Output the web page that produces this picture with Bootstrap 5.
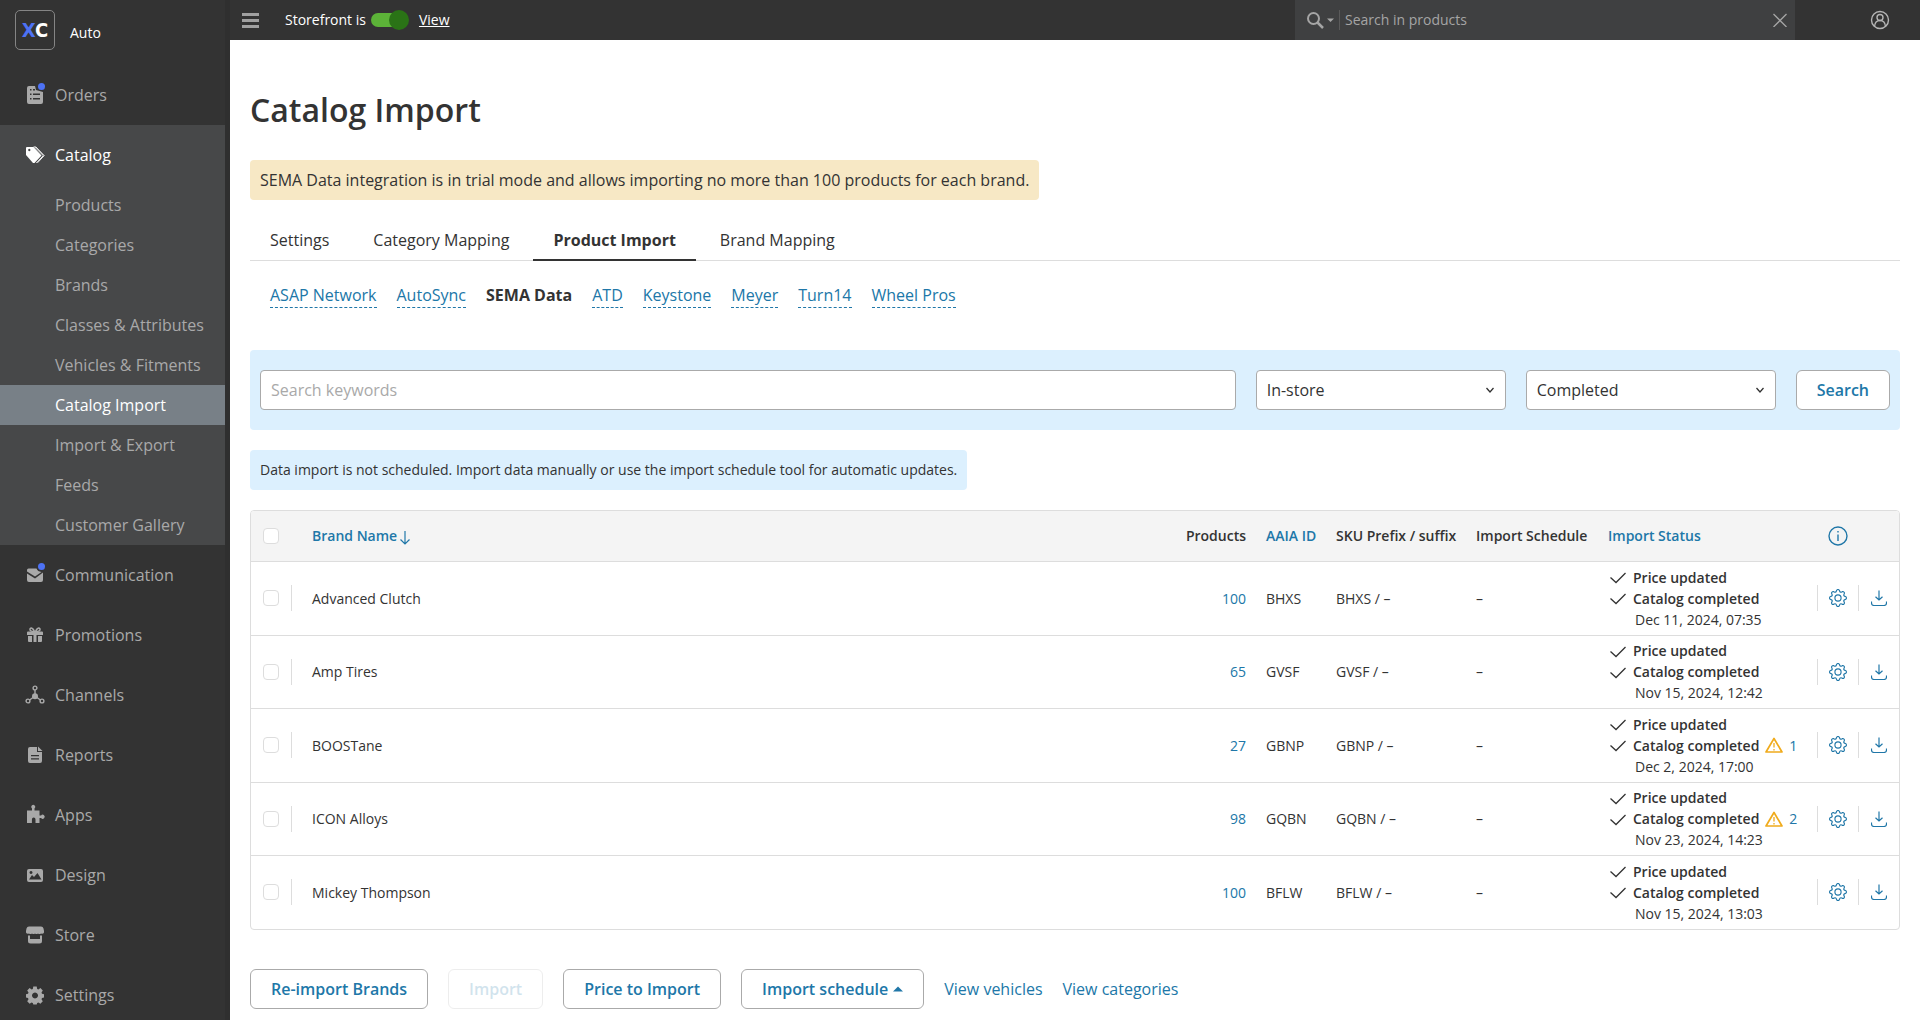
<!DOCTYPE html>
<html lang="en">
<head>
<meta charset="utf-8">
<meta name="viewport" content="width=device-width, initial-scale=1">
<title>Catalog Import</title>
<link href="https://cdn.jsdelivr.net/npm/bootstrap@5.3.0/dist/css/bootstrap.min.css" rel="stylesheet">
<style>
:root { --ink: #333; --blue: #2077a8; --line: #ddd; --muted: #a9a9a9; }
body { font-family: "Open Sans", "Noto Sans", sans-serif; font-size: 16px; line-height: 24px; color: var(--ink); background: #fff; }
a { color: var(--blue); text-decoration: none; }
.fs-small { font-size: 14px; line-height: 20px; }
.fw-mid { font-weight: 500; }

/* sidebar */
.side { width: 230px; background: #333; border-right: 5px solid #2f2f2f; }
.brand { height: 65px; padding: 10px 15px; gap: 15px; }
.brand-logo { width: 40px; height: 40px; border: 1px solid #858585; border-radius: 5px; font: 700 20px/38px "DejaVu Sans Condensed", "DejaVu Sans", sans-serif; color: #fff; text-align: center; }
.brand-logo span { color: #4d72f5; }
.brand-name { color: #fff; font-weight: 500; margin-top: 13px; }
.side-link { display: flex; align-items: center; height: 60px; padding-left: 25px; gap: 10px; color: var(--muted); }
.side-link svg { width: 20px; height: 20px; fill: currentColor; overflow: visible; }
.side-open { background: #474849; }
.side-open > .side-link { color: #fff; font-weight: 500; }
.sub-link { display: block; height: 40px; line-height: 40px; padding-left: 55px; color: var(--muted); }
.sub-link.active { background: #788087; color: #fff; font-weight: 500; }

/* top bar */
.topbar { height: 40px; background: #333; padding-left: 12px; color: #fff; }
.menu-btn { width: 17px; height: 20px; margin-right: 26px; padding: 0; border: 0; background: none; color: #a0a0a0; display: flex; align-items: center; }
.shop-switch { appearance: none; width: 38px; height: 20px; margin: 0 10px 0 5px; border: 0; background: url("data:image/svg+xml,%3Csvg xmlns='http://www.w3.org/2000/svg' viewBox='0 0 38 20'%3E%3Crect y='3' width='34' height='14' rx='7' fill='%235cb338'/%3E%3Ccircle cx='28' cy='10' r='10' fill='%232a7316'/%3E%3C/svg%3E"); }
.top-search { width: 500px; height: 40px; background: #3f4041; color: #a5a5a5; padding: 0 8px 0 12px; }
.top-search input { flex: 1; min-width: 0; border: 0; border-left: 1px solid #5a5a5a; outline: 0; height: 20px; padding: 0 5px; background: none; color: #a5a5a5; }
.top-search input::placeholder { color: #a5a5a5; opacity: 1; }
.icon-btn { border: 0; padding: 0; background: none; color: inherit; display: flex; align-items: center; }
.account { width: 125px; padding-right: 30px; color: #b5b5b5; }

/* content */
.content { padding: 50px 20px 10px; }
.page-title { font-size: 32px; line-height: 40px; font-weight: 600; margin: 0 0 30px; }
.note { width: fit-content; padding: 8px 10px; border-radius: 4px; }
.note-warn { background: #f7e8c5; }
.note-info { background: #dcf0fe; padding: 10px; margin-bottom: 20px; }
.page-tabs { gap: 4px; margin: 20px 0 23px; box-shadow: inset 0 -1px var(--line); }
.page-tabs a { display: block; height: 41px; line-height: 40px; padding: 0 20px; color: var(--ink); }
.page-tabs a.active { font-weight: 700; box-shadow: inset 0 -2px var(--ink); }
.source-tabs { gap: 20px; padding: 0 20px; margin-bottom: 42px; line-height: 22px; }
.source-tabs a { display: block; height: 24px; border-bottom: 1px dashed var(--blue); }
.source-tabs a.active { font-weight: 700; color: var(--ink); border-color: transparent; }
.filter { background: #dcf0fe; border-radius: 4px; padding: 20px 10px; gap: 20px; margin-bottom: 20px; }
.filter .form-control, .filter .form-select { height: 40px; border: 1px solid #aaa; border-radius: 4px; padding: 0 10px; color: var(--ink); }
.filter .form-control::placeholder { color: #a9a9a9; }
.filter .form-select { width: 250px; background-image: url("data:image/svg+xml,%3Csvg xmlns='http://www.w3.org/2000/svg' viewBox='0 0 10 10' fill='none' stroke='%23333' stroke-width='1.3'%3E%3Cpath d='M1.5 3 5 7l3.500-4'/%3E%3C/svg%3E"); background-size: 10px 10px; background-position: right 10px center; }
.btn-line { height: 40px; padding: 0 20px; border: 1px solid #aaa; border-radius: 6px; background: #fff; color: var(--blue); font-weight: 600; font-size: 16px; line-height: 24px; }
.btn-line:disabled { opacity: .2; color: var(--blue); background: #fff; border-color: #aaa; }
.actions { gap: 20px; }

/* brand table */
.grid-box { border: 1px solid var(--line); border-radius: 4px; overflow: hidden; margin-bottom: 39px; }
.brands { width: 100%; table-layout: fixed; font-size: 14px; line-height: 21px; }
.brands th { height: 50px; background: #f4f4f4; font-weight: 600; padding: 0 10px; white-space: nowrap; }
.brands td { padding: 0 10px; border-top: 1px solid var(--line); white-space: nowrap; }
.brands tbody tr:nth-child(odd) { height: 74px; }
.brands tbody tr:nth-child(even) { height: 73px; }
.brands .pick { padding: 0 0 0 12px; }
.brands .tool { padding: 0; }
.tool a { display: flex; justify-content: center; align-items: center; height: 26px; border-left: 1px solid var(--line); }
.pick-in { display: flex; align-items: center; height: 26px; width: 29px; }
.brands td .pick-in { border-right: 1px solid var(--line); }
.pick input { appearance: none; width: 16px; height: 16px; margin: 0; border: 1px solid var(--line); border-radius: 4px; background: #fff; }
.sort-arrow { margin-left: 3px; }
.state { display: flex; align-items: center; height: 21px; gap: 5px; font-weight: 600; }
.state .warn { display: flex; align-items: center; gap: 6px; font-weight: 400; margin-left: 1px; }
.state-date { padding-left: 27px; }
</style>
<script src="https://cdn.jsdelivr.net/npm/bootstrap@5.3.0/dist/js/bootstrap.bundle.min.js"></script>
</head>
<body>
<svg class="d-none" aria-hidden="true">
  <symbol id="gear" viewBox="0 0 16 16"><path d="M8 4.754a3.246 3.246 0 1 0 0 6.492 3.246 3.246 0 0 0 0-6.492M5.754 8a2.246 2.246 0 1 1 4.492 0 2.246 2.246 0 0 1-4.492 0"/><path d="M9.796 1.343c-.527-1.79-3.065-1.79-3.592 0l-.094.319a.873.873 0 0 1-1.255.52l-.292-.16c-1.64-.892-3.433.902-2.54 2.541l.159.292a.873.873 0 0 1-.52 1.255l-.319.094c-1.79.527-1.79 3.065 0 3.592l.319.094a.873.873 0 0 1 .52 1.255l-.16.292c-.892 1.64.901 3.434 2.541 2.54l.292-.159a.873.873 0 0 1 1.255.52l.094.319c.527 1.79 3.065 1.79 3.592 0l.094-.319a.873.873 0 0 1 1.255-.52l.292.16c1.64.893 3.434-.902 2.54-2.541l-.159-.292a.873.873 0 0 1 .52-1.255l.319-.094c1.79-.527 1.79-3.065 0-3.592l-.319-.094a.873.873 0 0 1-.52-1.255l.16-.292c.893-1.64-.902-3.433-2.541-2.54l-.292.159a.873.873 0 0 1-1.255-.52zm-2.633.283c.246-.835 1.428-.835 1.674 0l.094.319a1.873 1.873 0 0 0 2.693 1.115l.291-.16c.764-.415 1.6.42 1.184 1.185l-.159.292a1.873 1.873 0 0 0 1.116 2.692l.318.094c.835.246.835 1.428 0 1.674l-.319.094a1.873 1.873 0 0 0-1.115 2.693l.16.291c.415.764-.42 1.6-1.185 1.184l-.291-.159a1.873 1.873 0 0 0-2.693 1.116l-.094.318c-.246.835-1.428.835-1.674 0l-.094-.319a1.873 1.873 0 0 0-2.692-1.115l-.292.16c-.764.415-1.6-.42-1.184-1.185l.159-.291A1.873 1.873 0 0 0 1.945 8.93l-.319-.094c-.835-.246-.835-1.428 0-1.674l.319-.094A1.873 1.873 0 0 0 3.06 4.377l-.16-.292c-.415-.764.42-1.6 1.185-1.184l.292.159a1.873 1.873 0 0 0 2.692-1.115z"/></symbol>
  <symbol id="save" viewBox="0 0 16 16"><path d="M8 .5v9.500M4.500 6.800 8 10l3.500-3.200M.5 11.500v1.500q0 2.500 2.500 2.500h10q2.500 0 2.500-2.500v-1.500" fill="none" stroke="currentColor" stroke-width="1.2"/></symbol>
  <symbol id="tick" viewBox="0 0 20 16"><path d="m2.500 8.500 5.500 5 9.500-9.500" fill="none" stroke="currentColor" stroke-width="1.3"/></symbol>
  <symbol id="alert" viewBox="0 0 18 16"><path d="M9 1.500 17 15H1z" fill="none" stroke="#f0ab1c" stroke-width="1.7" stroke-linejoin="round"/><path d="M9 6v4.500M9 12v1.500" stroke="#f0ab1c" stroke-width="1.3"/></symbol>
</svg>

<div class="d-flex align-items-start">
  <nav class="side flex-shrink-0 vh-100 sticky-top overflow-hidden" aria-label="Main">
    <div class="brand d-flex align-items-start">
      <div class="brand-logo"><span>X</span>C</div>
      <div class="brand-name fs-small">Auto</div>
    </div>
    <a class="side-link" href="#"><svg viewBox="0 0 20 20"><path fill-rule="evenodd" d="M4 1h6l1 4 7 2v10q0 2-2 2H4q-2 0-2-2V3q0-2 2-2zm1 3v1.500h1.500V4zm3 0v1.500h2V4zM5 8.500V10h1.500V8.500zm3 0V10h7V8.500zM5 13v1.500h1.500V13zm3 0v1.500h7V13z"/><circle cx="16.500" cy="1.500" r="3.500" fill="#4d72f5"/></svg>Orders</a>
    <div class="side-open">
      <a class="side-link" href="#"><svg viewBox="0 0 20 20"><path fill-rule="evenodd" d="M2 2h6.500l8 8.500-7 7.500h-1.500L1 10V3q0-1 1-1zm2.300 1.800a1.200 1.200 0 1 0 .01 0z"/><path d="M9.800 2.200 18.300 10.600 11.300 18M8.500 2H11l8.200 8.600-6.700 7.200" fill="none" stroke="currentColor" stroke-width=".9"/></svg>Catalog</a>
      <a class="sub-link" href="#">Products</a>
      <a class="sub-link" href="#">Categories</a>
      <a class="sub-link" href="#">Brands</a>
      <a class="sub-link" href="#">Classes &amp; Attributes</a>
      <a class="sub-link" href="#">Vehicles &amp; Fitments</a>
      <a class="sub-link active" href="#" aria-current="page">Catalog Import</a>
      <a class="sub-link" href="#">Import &amp; Export</a>
      <a class="sub-link" href="#">Feeds</a>
      <a class="sub-link" href="#">Customer Gallery</a>
    </div>
    <a class="side-link" href="#"><svg viewBox="0 0 20 20"><path d="M2 5q0-1.500 1.500-1.500h8q1 3 5 3.500L10 11.500 2 6.500zM2 8.500l8 5 8-6V15q0 2-2 2H4q-2 0-2-2z"/><circle cx="16.500" cy="1.500" r="3.500" fill="#4d72f5"/></svg>Communication</a>
    <a class="side-link" href="#"><svg viewBox="0 0 20 20"><path d="M2 7.500q0-1 1-1h5.500V10H2zm9.500-1H17q1 0 1 1V10h-6.500zM3 11h4v6H4q-1 0-1-1zm5.500-4h3v10h-3zM13 11h4v5q0 1-1 1h-3z"/><path d="M9.500 6.500C8 2.500 5.500 2.500 5 4s1 2.500 4.500 2.500zm1 0C12 2.500 14.500 2.500 15 4s-1 2.500-4.500 2.500z" fill="none" stroke="currentColor" stroke-width="1.500"/></svg>Promotions</a>
    <a class="side-link" href="#"><svg viewBox="0 0 20 20"><g fill="none" stroke="currentColor" stroke-width="1.400"><circle cx="10" cy="3" r="1.900"/><circle cx="3" cy="16" r="1.900"/><circle cx="17" cy="16" r="1.900"/><path d="M10 5v6M4.600 15 10 11l5.400 4"/></g><circle cx="10" cy="11.300" r="3"/></svg>Channels</a>
    <a class="side-link" href="#"><svg viewBox="0 0 20 20"><path fill-rule="evenodd" d="M5 2h7v5h5v9q0 2-2 2H5q-2 0-2-2V4q0-2 2-2zm1 8v1.300h8V10zm0 3.200v1.300h8v-1.300z"/><path d="m13 1.500 4.500 4.500H13z"/></svg>Reports</a>
    <a class="side-link" href="#"><svg viewBox="0 0 20 20"><path d="M2 5.500h5V3.500a2 2 0 1 1 2.500 0v2h5v5h1.600a2 2 0 1 1 0 2.500h-1.600V18h-4v-3.500q0-2-1.800-2t-1.800 2V18H2z"/></svg>Apps</a>
    <a class="side-link" href="#"><svg viewBox="0 0 20 20"><path fill-rule="evenodd" d="M4 4h12q2 0 2 2v9q0 2-2 2H4q-2 0-2-2V6q0-2 2-2zm0 10.500h12.500L12.500 8 9 12l-2-2zM6 6a1.500 1.500 0 1 0 .01 0z"/></svg>Design</a>
    <a class="side-link" href="#"><svg viewBox="0 0 20 20"><path d="M4 1.500h12q2 0 2.500 2L19 6v1.500q-1 2-3 1-1.500 1-3 0-1.500 1-3 0-1.500 1-3 0-1.500 1-3 0-2 1-3-1V6l.5-2.500q.5-2 2.500-2z"/><path d="M3 10.500h2V14h10v-3.500h2V16q0 2.500-2.500 2.500h-9Q3 18.500 3 16z"/></svg>Store</a>
    <a class="side-link" href="#"><svg viewBox="0 0 20 20"><path fill-rule="evenodd" d="M8.300 1.500h3.400l.5 2.400 1.200.5 2-1.300L17.800 5.500l-1.300 2.100.5 1.200 2 .4v3.400l-2 .4-.5 1.200 1.300 2.100-2.400 2.400-2-1.300-1.200.5-.5 1.600H8.300l-.5-1.600-1.200-.5-2 1.300-2.400-2.400 1.300-2.100L3 13l-2-.4V9.200l2-.4.5-1.200L2.200 5.500l2.400-2.400 2 1.300 1.200-.5zM10 7.500a3 3 0 1 0 .01 0z"/></svg>Settings</a>
  </nav>

  <div class="flex-grow-1">
    <header class="topbar d-flex align-items-center fs-small">
      <button class="menu-btn" aria-label="Toggle menu"><svg width="17" height="15" fill="currentColor"><path d="M0 0h17v3H0zM0 6h17v3H0zM0 12h17v3H0z"/></svg></button>
      <label class="fw-mid" for="shop">Storefront is</label>
      <input class="shop-switch" type="checkbox" id="shop" role="switch" checked>
      <a class="fw-mid text-white text-decoration-underline" href="#">View</a>
      <form class="top-search d-flex align-items-center ms-auto">
        <button type="button" class="icon-btn" aria-label="Search scope"><svg width="32" height="20" fill="none" stroke="currentColor"><circle cx="6.500" cy="8.500" r="5.500" stroke-width="2"/><path d="m10.500 12.500 5.500 5.500" stroke-width="2.500"/><path d="M20 8.500h7L23.500 12z" fill="currentColor" stroke="none"/></svg></button>
        <input type="text" placeholder="Search in products" aria-label="Search in products">
        <button type="reset" class="icon-btn" aria-label="Clear"><svg width="14" height="14" fill="none" stroke="currentColor" stroke-width="1.300"><path d="m.5 1 13 13M13.500 1l-13 13"/></svg></button>
      </form>
      <div class="account d-flex justify-content-end"><button class="icon-btn" aria-label="Account"><svg width="20" height="20" fill="none" stroke="currentColor" stroke-width="1.400"><circle cx="10" cy="10" r="8.500"/><circle cx="10" cy="7.500" r="3"/><path d="M4.500 16.500q.5-6 5.500-6t5.500 6"/></svg></button></div>
    </header>

    <main class="content">
      <h1 class="page-title">Catalog Import</h1>
      <div class="note note-warn">SEMA Data integration is in trial mode and allows importing no more than 100 products for each brand.</div>

      <ul class="page-tabs list-unstyled d-flex flex-wrap">
        <li><a href="#">Settings</a></li>
        <li><a href="#">Category Mapping</a></li>
        <li><a class="active" href="#" aria-current="page">Product Import</a></li>
        <li><a href="#">Brand Mapping</a></li>
      </ul>
      <ul class="source-tabs list-unstyled d-flex flex-wrap">
        <li><a href="#">ASAP Network</a></li>
        <li><a href="#">AutoSync</a></li>
        <li><a class="active" href="#" aria-current="page">SEMA Data</a></li>
        <li><a href="#">ATD</a></li>
        <li><a href="#">Keystone</a></li>
        <li><a href="#">Meyer</a></li>
        <li><a href="#">Turn14</a></li>
        <li><a href="#">Wheel Pros</a></li>
      </ul>

      <form class="filter d-flex">
        <input class="form-control flex-grow-1 w-auto" type="text" placeholder="Search keywords" aria-label="Search keywords">
        <select class="form-select flex-shrink-0" aria-label="Availability"><option>In-store</option></select>
        <select class="form-select flex-shrink-0" aria-label="Import state"><option>Completed</option></select>
        <button class="btn btn-line" type="button">Search</button>
      </form>

      <div class="note note-info fs-small">Data import is not scheduled. Import data manually or use the import schedule tool for automatic updates.</div>

      <div class="grid-box">
        <table class="brands">
          <colgroup><col style="width:51px"><col><col style="width:100px"><col style="width:70px"><col style="width:140px"><col style="width:132px"><col style="width:219px"><col style="width:41px"><col style="width:41px"></colgroup>
          <thead>
            <tr>
              <th class="pick"><div class="pick-in"><input type="checkbox" aria-label="Select all"></div></th>
              <th><a href="#">Brand Name<svg class="sort-arrow" width="10" height="14" fill="none" stroke="currentColor" stroke-width="1.200"><path d="M5 0v13M.5 8.500 5 13l4.500-4.500"/></svg></a></th>
              <th class="text-end">Products</th>
              <th><a href="#">AAIA ID</a></th>
              <th>SKU Prefix / suffix</th>
              <th>Import Schedule</th>
              <th><a href="#">Import Status</a></th>
              <th class="tool"><a class="border-0" href="#" aria-label="Info"><svg width="20" height="20" fill="none" stroke="currentColor" stroke-width="1.400"><circle cx="10" cy="10" r="9"/><path d="M10 8.500V15M10 5v1.500"/></svg></a></th>
              <th class="tool"></th>
            </tr>
          </thead>
          <tbody>
            <tr>
              <td class="pick"><div class="pick-in"><input type="checkbox" aria-label="Select Advanced Clutch"></div></td>
              <td>Advanced Clutch</td><td class="text-end"><a href="#">100</a></td><td>BHXS</td><td>BHXS / –</td><td>–</td>
              <td><div class="state"><svg width="20" height="16"><use href="#tick"/></svg>Price updated</div><div class="state"><svg width="20" height="16"><use href="#tick"/></svg>Catalog completed</div><div class="state-date">Dec 11, 2024, 07:35</div></td>
              <td class="tool"><a href="#" aria-label="Settings"><svg width="18" height="18" fill="currentColor"><use href="#gear"/></svg></a></td>
              <td class="tool"><a href="#" aria-label="Import"><svg width="16" height="16"><use href="#save"/></svg></a></td>
            </tr>
            <tr>
              <td class="pick"><div class="pick-in"><input type="checkbox" aria-label="Select Amp Tires"></div></td>
              <td>Amp Tires</td><td class="text-end"><a href="#">65</a></td><td>GVSF</td><td>GVSF / –</td><td>–</td>
              <td><div class="state"><svg width="20" height="16"><use href="#tick"/></svg>Price updated</div><div class="state"><svg width="20" height="16"><use href="#tick"/></svg>Catalog completed</div><div class="state-date">Nov 15, 2024, 12:42</div></td>
              <td class="tool"><a href="#" aria-label="Settings"><svg width="18" height="18" fill="currentColor"><use href="#gear"/></svg></a></td>
              <td class="tool"><a href="#" aria-label="Import"><svg width="16" height="16"><use href="#save"/></svg></a></td>
            </tr>
            <tr>
              <td class="pick"><div class="pick-in"><input type="checkbox" aria-label="Select BOOSTane"></div></td>
              <td>BOOSTane</td><td class="text-end"><a href="#">27</a></td><td>GBNP</td><td>GBNP / –</td><td>–</td>
              <td><div class="state"><svg width="20" height="16"><use href="#tick"/></svg>Price updated</div><div class="state"><svg width="20" height="16"><use href="#tick"/></svg>Catalog completed<a class="warn" href="#"><svg width="18" height="16"><use href="#alert"/></svg>1</a></div><div class="state-date">Dec 2, 2024, 17:00</div></td>
              <td class="tool"><a href="#" aria-label="Settings"><svg width="18" height="18" fill="currentColor"><use href="#gear"/></svg></a></td>
              <td class="tool"><a href="#" aria-label="Import"><svg width="16" height="16"><use href="#save"/></svg></a></td>
            </tr>
            <tr>
              <td class="pick"><div class="pick-in"><input type="checkbox" aria-label="Select ICON Alloys"></div></td>
              <td>ICON Alloys</td><td class="text-end"><a href="#">98</a></td><td>GQBN</td><td>GQBN / –</td><td>–</td>
              <td><div class="state"><svg width="20" height="16"><use href="#tick"/></svg>Price updated</div><div class="state"><svg width="20" height="16"><use href="#tick"/></svg>Catalog completed<a class="warn" href="#"><svg width="18" height="16"><use href="#alert"/></svg>2</a></div><div class="state-date">Nov 23, 2024, 14:23</div></td>
              <td class="tool"><a href="#" aria-label="Settings"><svg width="18" height="18" fill="currentColor"><use href="#gear"/></svg></a></td>
              <td class="tool"><a href="#" aria-label="Import"><svg width="16" height="16"><use href="#save"/></svg></a></td>
            </tr>
            <tr>
              <td class="pick"><div class="pick-in"><input type="checkbox" aria-label="Select Mickey Thompson"></div></td>
              <td>Mickey Thompson</td><td class="text-end"><a href="#">100</a></td><td>BFLW</td><td>BFLW / –</td><td>–</td>
              <td><div class="state"><svg width="20" height="16"><use href="#tick"/></svg>Price updated</div><div class="state"><svg width="20" height="16"><use href="#tick"/></svg>Catalog completed</div><div class="state-date">Nov 15, 2024, 13:03</div></td>
              <td class="tool"><a href="#" aria-label="Settings"><svg width="18" height="18" fill="currentColor"><use href="#gear"/></svg></a></td>
              <td class="tool"><a href="#" aria-label="Import"><svg width="16" height="16"><use href="#save"/></svg></a></td>
            </tr>
          </tbody>
        </table>
      </div>

      <div class="actions d-flex flex-wrap align-items-center">
        <button class="btn btn-line" type="button">Re-import Brands</button>
        <button class="btn btn-line" type="button" disabled>Import</button>
        <button class="btn btn-line" type="button">Price to Import</button>
        <button class="btn btn-line" type="button">Import schedule<svg class="ms-1 mb-1" width="11" height="6" fill="currentColor"><path d="M1 5.500 6 .5l5 5z"/></svg></button>
        <a href="#">View vehicles</a>
        <a href="#">View categories</a>
      </div>
    </main>
  </div>
</div>
</body>
</html>
